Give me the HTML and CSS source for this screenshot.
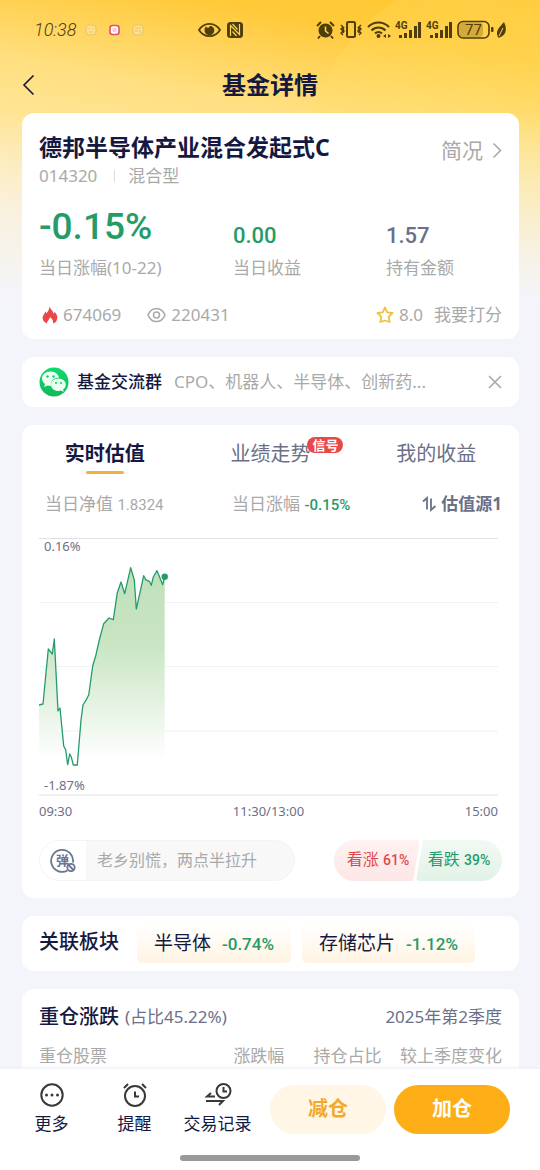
FILE: index.html
```html
<!DOCTYPE html>
<html lang="zh-CN">
<head>
<meta charset="utf-8">
<meta name="viewport" content="width=device-width, initial-scale=1">
<title>基金详情</title>
<link rel="stylesheet" href="styles.css">
</head>
<body>
<div class="app">
  <div class="status">
    <div class="status-left">
      <span class="clock">10:38</span>
      <svg class="notices" width="60" height="12" viewBox="0 0 60 12" fill="none">
        <g stroke="#e3c46a"><rect x="1" y="1" width="10" height="10" rx="3" fill="#ffe08a"/><path d="M4 4v1M8 4v1M4 8h4"/></g>
        <rect x="25" y="1.500" width="9" height="9" rx="2.500" fill="#fff" stroke="#e0506c" stroke-width="1.600"/><path d="M27.500 4h4v4h-4z" fill="#f9c9d6"/>
        <g stroke="#e3c46a"><rect x="48" y="1" width="10" height="10" rx="3" fill="#ffe08a"/><path d="M50 4h6M50 7h3M54 6l2 3"/></g>
      </svg>
    </div>
    <svg class="status-mid" width="46" height="18" viewBox="0 0 46 18">
      <path d="M1 9C6 .8 17 .8 22 9C17 17.200 6 17.200 1 9z" fill="none" stroke="#4f3d0c" stroke-width="1.800"/>
      <path d="M8 5.500c1 1.800 3 1.800 4-.8 2.500.3 4.300 2 4.300 4.600a4.900 4.900 0 0 1-9.800 0c0-1.500.5-2.800 1.500-3.800z" fill="#4f3d0c"/>
      <rect x="29" y="1" width="16" height="16" rx="3.500" fill="#4f3d0c"/>
      <path d="M32.500 15V4.500l9 9V3M34.500 3l5 5.500M34.500 10.500l4 4.500" stroke="#ffd452" stroke-width="1.200" fill="none"/>
    </svg>
    <svg class="status-right" width="192" height="20" viewBox="0 0 192 20" fill="none" stroke="#4f3d0c">
      <g transform="translate(0 1)">
        <circle cx="9.500" cy="9.500" r="7" fill="#4f3d0c" stroke="none"/><path d="M1 5l4-4M18 5l-4-4M4 15l-2 2.500M15 15l2 2.500" stroke-width="2"/><path d="M9.500 5.500v4.500l3 2.500" stroke="#ffd452" stroke-width="1.600"/>
        <rect x="31" y="1" width="8" height="15" rx="1.500" stroke-width="2"/><path d="M25 4l2 2-2 2 2 2-2 2 2 2M28 6l-1 2 1 2-1 2M45 4l-2 2 2 2-2 2 2 2-2 2M42 6l1 2-1 2 1 2" stroke-width="1.400"/>
        <path d="M52 6c6-6 15-6 21 0M55.500 9.500c4-4 10-4 14 0M59 12.500c2-2 5-2 7 0" stroke-width="2.200"/><circle cx="62.500" cy="15" r="2" fill="#4f3d0c" stroke="none"/><path d="M70 13l-3 2 3 2zM72 13l3 2-3 2z" fill="#4f3d0c" stroke="none"/>
      </g>
      <g fill="#4f3d0c" stroke="none">
        <text class="net" x="79" y="9">4G</text><text class="net" x="110" y="9">4G</text>
        <path d="M83 15h3v3h-3zM88 13h3v5h-3zM93 10h3v8h-3zM98 6h3v12h-3zM102 2h3v16h-3zM114 15h3v3h-3zM119 13h3v5h-3zM124 10h3v8h-3zM129 6h3v12h-3zM133 2h3v16h-3z"/>
        <rect x="143" y="2.500" width="24" height="14.500" rx="4" opacity=".25"/>
        <text class="battery" x="149" y="15">77</text>
        <rect x="175" y="7" width="2.500" height="5" rx="1"/>
        <path d="M188 2c4 8 1 14-4 15l-1 1-1-1c-3-6 1-9 6-15z"/>
      </g>
      <path d="M183 16l4-8" stroke="#ffd863"/>
      <rect x="142" y="1.500" width="31" height="16.500" rx="5" stroke-width="1.600"/>
    </svg>
  </div>

  <header class="topbar">
    <button class="back" aria-label="返回"><svg width="14" height="22" viewBox="0 0 14 22" fill="none" stroke="#15183a" stroke-width="1.600"><path d="M11.500 1.500L2 11l9.500 9.500"/></svg></button>
    <h1>基金详情</h1>
  </header>

  <main class="scroll">
    <section class="card summary">
      <div class="summary-head">
        <div>
          <h2>德邦半导体产业混合发起式C</h2>
          <p class="code"><span>014320</span><i class="bar"></i><span>混合型</span></p>
        </div>
        <a class="brief" href="#brief">简况<svg width="10" height="17" viewBox="0 0 10 17" fill="none" stroke="#a9a9a9" stroke-width="1.600"><path d="M1.500 1.500l7 7-7 7"/></svg></a>
      </div>
      <dl class="stats">
        <div><dd class="big green">-0.15%</dd><dt>当日涨幅(10-22)</dt></div>
        <div><dd class="green">0.00</dd><dt>当日收益</dt></div>
        <div><dd class="slate">1.57</dd><dt>持有金额</dt></div>
      </dl>
      <div class="meta">
        <span class="meta-item"><svg width="16" height="18" viewBox="0 0 16 18"><path d="M7.500.3C8 3.500 11.300 4.500 11.500 7.800c.8-.5 1-1.300.9-2C14.500 7.500 15.600 9.800 15.300 12.300c-.3 2.700-1.800 4.600-4.300 5.200.7-2.500-.8-4.500-3-6.500-.2 2.500-3.300 3.800-2.800 6.500C2.300 16.800.5 14.500.6 11.600.7 9 2.800 8 3.200 5.500c.8.600 1 1.300 1 2C6 5.700 7.300 3.500 7.500.3z" fill="#e94848"/></svg>674069</span>
        <span class="meta-item"><svg width="19" height="16" viewBox="0 0 19 16" fill="none" stroke="#a9a9a9" stroke-width="1.500"><path d="M1 8C4.500-.8 14.500-.8 18 8C14.500 16.800 4.500 16.800 1 8z"/><circle cx="9.500" cy="8" r="3"/></svg>220431</span>
        <a class="meta-item rate" href="#rate"><svg width="18" height="18" viewBox="0 0 18 18" fill="none" stroke="#eec33c" stroke-width="1.800" stroke-linejoin="round"><path d="M9 1.500l2.300 4.800 5.300.7-3.900 3.700 1 5.300L9 14.500 4.300 16l1-5.300L1.400 7l5.300-.7z"/></svg>8.0<span class="rate-label">我要打分</span></a>
      </div>
    </section>

    <section class="card group">
      <svg width="30" height="30" viewBox="0 0 30 30"><defs><linearGradient id="wx" x1="0" y1="0" x2="0" y2="1"><stop offset="0" stop-color="#0bdc6c"/><stop offset="1" stop-color="#13b85c"/></linearGradient></defs><circle cx="15" cy="15" r="14.500" fill="url(#wx)"/><path d="M11.500 4.500C6.500 4.500 3 7.500 3 11.500c0 2.300 1.200 4 3 5.400L5.200 20l3.300-1.500c1 .3 2 .5 3.500.5-1-5 3-8.500 8-8.500C19 6.500 15.500 4.500 11.500 4.500z" fill="#effff3"/><path d="M19.500 11.500c-4.500 0-7.500 2.800-7.500 6.200s3.200 6.300 7.500 6.300c.9 0 1.800-.1 2.600-.4l2.700 1.400-.7-2.500c1.700-1.200 2.700-2.900 2.700-4.800 0-3.400-3.100-6.200-7.300-6.200z" fill="#e9fff0"/><g fill="#12c864"><circle cx="8.500" cy="9.500" r="1.200"/><circle cx="14.500" cy="9.500" r="1.200"/><circle cx="17" cy="16" r="1"/><circle cx="22" cy="16" r="1"/></g></svg>
      <strong>基金交流群</strong>
      <span class="topics">CPO、机器人、半导体、创新药...</span>
      <button class="close" aria-label="关闭"><svg width="14" height="14" viewBox="0 0 14 14" stroke="#a6a6a6" stroke-width="1.500"><path d="M1 1l12 12M13 1L1 13"/></svg></button>
    </section>

    <section class="card estimate">
      <div class="tabs" role="tablist">
        <button class="tab active" role="tab" aria-selected="true">实时估值</button>
        <button class="tab" role="tab"><span class="tab-label">业绩走势<em class="badge">信号</em></span></button>
        <button class="tab" role="tab">我的收益</button>
      </div>
      <div class="figures">
        <span class="nav-value">当日净值 <b>1.8324</b></span>
        <span class="day-change">当日涨幅 <b class="green">-0.15%</b></span>
        <button class="source"><svg width="14" height="16" viewBox="0 0 14 16" fill="none" stroke="#6b7088" stroke-width="1.800"><path d="M1 5.500L5 2v11.500M9 2.500V14l4.500-4"/></svg>估值源1</button>
      </div>
      <svg class="chart" viewBox="0 0 459 258" role="img" aria-label="实时估值走势">
        <defs><linearGradient id="area" x1="0" y1="0" x2="0" y2="1"><stop offset="0" stop-color="#bfe0b9"/><stop offset=".4" stop-color="#c9e5c4"/><stop offset="1" stop-color="#fff"/></linearGradient></defs>
        <path d="M0 64.500H459M0 128.500H459M0 193H459" stroke="#f0f2f3"/>
        <path d="M0 .5H459M0 257H459" stroke="#dfe0e3"/>
        <path d="M0 222V167L4 166 9.300 111 13.300 116 15.300 101 19 173 21 170 24.700 208 26.700 212 28 222H29.500L30.700 216 32.300 219 33.300 222H39L42 182 44 167 46.700 162.700 49.700 157 53.700 128 57 116.700 60.300 102 64.700 85.700 70 80 74.300 81.700 78.300 54.700 82 44 85.700 55.700 91.700 29.700 95.300 42 97.300 71 100.300 57.700 104.700 37.700 106.700 41.700 110.300 43.300 112.300 47.300 114.300 39 118 32.700 123.700 46.700 125.700 38.700V222z" fill="url(#area)"/>
        <path d="M0 167L4 166 9.300 111 13.300 116 15.300 101 19 173 21 170 24.700 208 26.700 212 28.700 226.700 30.700 216 32.300 219 34.300 227H38.300L42 182 44 167 46.700 162.700 49.700 157 53.700 128 57 116.700 60.300 102 64.700 85.700 70 80 74.300 81.700 78.300 54.700 82 44 85.700 55.700 91.700 29.700 95.300 42 97.300 71 100.300 57.700 104.700 37.700 106.700 41.700 110.300 43.300 112.300 47.300 114.300 39 118 32.700 123.700 46.700 125.700 38.700" fill="none" stroke="#259b6c" stroke-width="1.300" stroke-linejoin="round"/>
        <circle cx="125.700" cy="38.700" r="3.200" fill="#259b6c"/>
        <text x="5" y="13">0.16%</text><text x="5" y="252">-1.87%</text>
      </svg>
      <div class="axis"><span>09:30</span><span>11:30/13:00</span><span>15:00</span></div>
      <div class="talk">
        <div class="danmu">
          <button class="danmu-toggle" aria-label="弹幕开关"><svg width="28" height="26" viewBox="0 0 28 26" fill="none" stroke="#6b7490" stroke-width="1.800"><path d="M18.500 22.500A11 11 0 1 1 24 14.500"/><circle cx="22" cy="19.500" r="3.700"/><path d="M19.500 17l5 5"/><text class="dan" x="7" y="17">弹</text></svg></button>
          <input type="text" aria-label="弹幕" placeholder="老乡别慌，两点半拉升">
        </div>
        <div class="vote">
          <button class="vote-up">看涨 <b>61%</b></button>
          <button class="vote-down">看跌 <b>39%</b></button>
        </div>
      </div>
    </section>

    <section class="card sectors">
      <h3>关联板块</h3>
      <a class="chip" href="#semiconductor">半导体 <b class="green">-0.74%</b></a>
      <a class="chip" href="#memory">存储芯片 <b class="green">-1.12%</b></a>
    </section>

    <section class="card holdings">
      <div class="holdings-head"><h3>重仓涨跌</h3><span class="share">(占比45.22%)</span><span class="quarter">2025年第2季度</span></div>
      <table>
        <thead><tr><th scope="col">重仓股票</th><th scope="col">涨跌幅</th><th scope="col">持仓占比</th><th scope="col">较上季度变化</th></tr></thead>
      </table>
    </section>
  </main>

  <footer class="bottom">
    <div class="actions">
      <button class="action"><svg width="26" height="26" viewBox="0 0 26 26" fill="none" stroke="#393939" stroke-width="2"><circle cx="13" cy="13" r="10.700"/><g fill="#393939" stroke="none"><circle cx="7.500" cy="13" r="1.500"/><circle cx="13" cy="13" r="1.500"/><circle cx="18.500" cy="13" r="1.500"/></g></svg>更多</button>
      <button class="action"><svg width="26" height="26" viewBox="0 0 26 26" fill="none" stroke="#393939" stroke-width="2"><circle cx="13" cy="14" r="10"/><path d="M13 9.500v5h4M2 6l4-4M24 6l-4-4"/></svg>提醒</button>
      <button class="action"><svg width="28" height="26" viewBox="0 0 28 26" fill="none" stroke="#393939" stroke-width="2"><circle cx="19.500" cy="9" r="7"/><path d="M19.500 5v4.500h3.500M11 14.500H3l4-3.500M2 19h17l-4 4"/></svg>交易记录</button>
      <button class="pill sell">减仓</button>
      <button class="pill buy">加仓</button>
    </div>
    <div class="home"></div>
  </footer>
</div>
</body>
</html>
```
FILE: styles.css
```css
* { box-sizing: border-box; }
body, h1, h2, h3, p, dl, dd { margin: 0; }
body {
  font: 17px/24px "Noto Sans", "Noto Sans CJK SC", sans-serif;
  color: #15183f;
  background: #f4f5fb;
}
button {
  margin: 0; padding: 0; border: 0; background: none;
  font: inherit; color: inherit; white-space: nowrap;
}
a { color: inherit; text-decoration: none; }
svg { display: block; flex: none; }
b, dd, .clock { font-family: Roboto, "Noto Sans CJK SC", sans-serif; }
b { font-weight: 500; }
.green { color: #259b68; }
.slate { color: #6b7088; }

.app {
  display: flex; flex-direction: column; height: 100vh; overflow: hidden;
  background:
    linear-gradient(to bottom, transparent 110px, #f4f5fb 300px),
    radial-gradient(circle at 520px 180px, #ffe68066 0, #ffe06a40 218px, transparent 220px),
    linear-gradient(190deg, #ffc62e 0, #ffca3a 60px, #ffdf80 150px, #ffe596 210px, #ffedbd 300px);
}

.status { display: flex; align-items: center; justify-content: space-between; height: 60px; padding: 0 32px 0 34px; }
.status-left { display: flex; align-items: center; gap: 8px; width: 164px; }
.clock { font-size: 18px; font-weight: 300; font-style: italic; color: #4f3d0c; }
.status-mid { margin-right: auto; }
.net { font: bold 10px Roboto, sans-serif; }
.battery { font: 15px Roboto, sans-serif; }

.topbar { position: relative; display: flex; align-items: center; justify-content: center; height: 53px; padding-bottom: 4px; }
.topbar h1 { font-size: 24px; line-height: 32px; }
.back { position: absolute; left: 22px; top: 14px; }

.scroll {
  flex: 1; min-height: 0; overflow-y: auto; scrollbar-width: none;
  display: flex; flex-direction: column; gap: 18px; padding: 0 21px 20px 22px;
}
.card { flex: none; background: #fff; border-radius: 12px; padding: 0 17px; }

.summary { padding-top: 19px; padding-bottom: 12px; }
.summary-head { display: flex; justify-content: space-between; }
.summary h2 { font-size: 23px; line-height: 30px; }
.code { display: flex; align-items: center; gap: 13px; line-height: 28px; color: #a9a9a9; }
.bar { width: 1px; height: 12px; margin-left: 4px; background: #ddd; }
.brief { display: flex; align-items: center; gap: 9px; height: 36px; font-size: 21px; color: #a9a9a9; }
.stats { display: grid; grid-template-columns: 194fr 153fr 116fr; margin-top: 10px; }
.stats > div { display: flex; flex-direction: column-reverse; justify-content: flex-start; }
.stats dd { font-size: 22px; line-height: 36px; font-weight: 500; }
.stats dd.big { font-size: 37px; line-height: 54px; }
.stats dt { order: -1; line-height: 28px; color: #a9a9a9; white-space: nowrap; }
.meta { display: flex; align-items: center; gap: 26px; margin: 21px 0 0 3px; line-height: 24px; color: #a9a9a9; }
.meta-item { display: flex; align-items: center; gap: 5px; }
.rate { margin-left: auto; }
.rate-label { margin-left: 6px; }

.group { display: flex; align-items: center; height: 50px; }
.group strong { margin: 0 12px 0 8px; font-weight: 500; }
.topics { color: #a9a9a9; white-space: nowrap; }
.close { margin-left: auto; }

.estimate { padding-bottom: 17px; }
.tabs { display: grid; grid-template-columns: repeat(3, 1fr); margin: 0 -17px; }
.tab { position: relative; height: 58px; font-size: 20px; color: #6b7088; }
.tab.active { font-weight: bold; color: #15183f; }
.tab.active::after {
  content: ""; position: absolute; left: calc(50% - 19px); top: 46px;
  width: 38px; height: 3px; border-radius: 2px; background: #f3b03c;
}
.tab-label { position: relative; }
.badge {
  position: absolute; left: 77px; top: -3px; width: 36px; height: 16px; border-radius: 8px;
  background: #e8484a; color: #fff; font-size: 13px; line-height: 16px; font-weight: bold; font-style: normal;
}
.figures { display: grid; grid-template-columns: 187fr 180fr 90fr; align-items: center; height: 42px; padding-left: 6px; color: #a9a9a9; }
.figures b { font-size: 15px; }
.nav-value b { font-weight: normal; }
.source { display: flex; align-items: center; justify-content: flex-end; gap: 5px; font-weight: bold; color: #6b7088; }
.chart { width: calc(100% - 4px); height: auto; margin-top: 13px; }
.chart text { font: 13px "Noto Sans", sans-serif; fill: #6b7088; }
.axis { display: flex; justify-content: space-between; margin-right: 4px; padding-top: 3px; font-size: 13px; color: #6b7088; }
.talk { display: flex; align-items: center; justify-content: space-between; margin-top: 17px; }
.danmu { display: flex; width: 256px; height: 41px; border: 1px solid #f4f4f4; border-radius: 21px; overflow: hidden; background: #f8f8f8; }
.danmu-toggle { display: flex; align-items: center; width: 46px; padding-left: 9px; background: #fff; }
.dan { font: bold 13px "Noto Sans CJK SC", sans-serif; fill: #6b7490; stroke: none; }
.danmu input { flex: 1; min-width: 0; border: 0; padding: 0 11px 2px; background: none; font: inherit; font-size: 16px; }
.danmu input::placeholder { color: #a9a9a9; opacity: 1; }
.vote { display: flex; font-size: 16px; }
.vote button { height: 41px; padding-bottom: 2px; }
.vote b { font-size: 14px; }
.vote .vote-up { width: 86px; padding-left: 2px; border-radius: 21px 4px 4px 21px; color: #e0494c; background: linear-gradient(#fff2f2, #fde6e6); clip-path: polygon(0 0, 100% 0, 79px 100%, 0 100%); }
.vote .vote-down { width: 86px; margin-left: -4px; border-radius: 4px 21px 21px 4px; color: #259b68; background: linear-gradient(#f2f9f4, #e2f2e6); clip-path: polygon(7px 0, 100% 0, 100% 100%, 0 100%); }

.sectors { display: flex; align-items: center; gap: 11px; height: 55px; }
.sectors h3 { margin: 0 7px 4px 0; }
h3 { font-size: 20px; line-height: 28px; font-weight: 500; white-space: nowrap; }
.chip { height: 39px; padding: 0 17px; border-radius: 5px; font-size: 19px; line-height: 39px; white-space: nowrap; background: linear-gradient(#fff, #fff4e3); }
.chip b { margin-left: 6px; font-size: 17px; }

.holdings { padding-top: 14px; padding-bottom: 24px; }
.holdings-head { display: flex; align-items: center; gap: 6px; color: #6b7088; }
.holdings h3 { color: #15183f; }
.quarter { margin-left: auto; }
.holdings table { width: 100%; margin-top: 13px; border-collapse: collapse; table-layout: fixed; }
.holdings th { padding: 0; font-weight: normal; color: #a9a9a9; text-align: right; white-space: nowrap; }
.holdings th:first-child { width: 30%; text-align: left; }
.holdings th:nth-child(2) { width: 23%; }
.holdings th:nth-child(3) { width: 21%; }

.bottom { position: relative; background: #fff; padding: 15px 30px 9px 10px; box-shadow: 0 -1px 4px #eceef5; }
.actions { display: flex; align-items: center; height: 50px; }
.action { display: flex; flex-direction: column; align-items: center; gap: 4px; flex: 1 1 0; min-width: 0; }
.pill { flex: none; width: 116px; height: 49px; margin-left: 8px; border-radius: 25px; font-size: 20px; font-weight: bold; }
.sell { margin-left: 11px; color: #f3a92c; background: #fff6e6; }
.buy { color: #fff; background: #fdae17; }
.home { width: 180px; height: 6px; margin: 21px auto 0; border-radius: 3px; background: #999; transform: translateX(10px); }
```
